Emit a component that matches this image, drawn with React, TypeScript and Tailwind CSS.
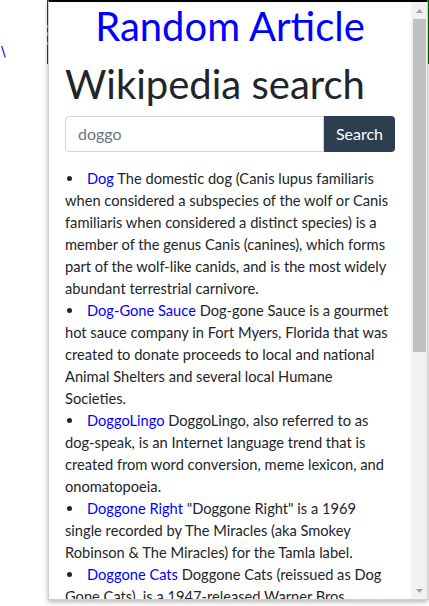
const results = [
  {
    title: "Dog",
    text: "The domestic dog (Canis lupus familiaris when considered a subspecies of the wolf or Canis familiaris when considered a distinct species) is a member of the genus Canis (canines), which forms part of the wolf-like canids, and is the most widely abundant terrestrial carnivore.",
  },
  {
    title: "Dog-Gone Sauce",
    text: "Dog-gone Sauce is a gourmet hot sauce company in Fort Myers, Florida that was created to donate proceeds to local and national Animal Shelters and several local Humane Societies.",
  },
  {
    title: "DoggoLingo",
    text: "DoggoLingo, also referred to as dog-speak, is an Internet language trend that is created from word conversion, meme lexicon, and onomatopoeia.",
  },
  {
    title: "Doggone Right",
    text: "\"Doggone Right\" is a 1969 single recorded by The Miracles (aka Smokey Robinson & The Miracles) for the Tamla label.",
  },
  {
    title: "Doggone Cats",
    text: "Doggone Cats (reissued as Dog Gone Cats), is a 1947-released Warner Bros. theatrical cartoon short in the Merrie Melodies series.",
  },
];

const Arrow = ({ up }: { up?: boolean }) => (
  <svg width="7" height="4" viewBox="0 0 7 4">
    <path d={up ? "M0 4 L3.5 0 L7 4 Z" : "M0 0 L3.5 4 L7 0 Z"} fill="#a3a3a3" />
  </svg>
);

const App = () => {
  return (
    <div className="relative w-[429px] h-[606px] overflow-hidden bg-white font-['Lato',sans-serif]">
      {/* page behind the popup */}
      <div className="absolute left-[47px] right-0 top-0 h-[64px] bg-[#006400]" />
      <div className="absolute left-[47px] top-[25px] w-[2px] h-[3px] bg-[#9a9a9a]" />
      <div className="absolute left-[47px] top-[32px] w-[2px] h-[4px] bg-[#9a9a9a]" />
      <div className="absolute left-[47px] top-[42px] w-[2px] h-[3px] bg-[#9a9a9a]" />
      <span className="absolute left-[1px] top-[43px] text-[14px] leading-[16px] text-[#0000ff] font-['DejaVu_Sans',sans-serif]">
        \
      </span>

      {/* popup */}
      <div className="absolute left-[48px] top-0 w-[380px] h-[600px] flex bg-white border border-[#cfcfcf] border-t-2 border-t-black shadow-[0_2px_5px_rgba(0,0,0,0.3)]">
        <div className="flex-1 overflow-hidden px-4">
          <div className="text-center text-[40px] leading-[48px] text-[#0000ff]">
            Random Article
          </div>
          <h1 className="mt-[10px] text-[40px] leading-[48px] text-[#212529]">
            Wikipedia search
          </h1>
          <div className="mt-2 flex h-[36px]">
            <input
              className="flex-1 min-w-0 px-3 text-[16px] border border-[#ced4da] rounded-l-[4px] outline-none placeholder:text-[#6c757d]"
              placeholder="doggo"
            />
            <button className="px-3 text-[16px] text-white bg-[#2c3e50] rounded-r-[4px]">
              Search
            </button>
          </div>
          <ul className="mt-[16px] text-[14.667px] leading-[22px] text-[#212529]">
            {results.map((r) => (
              <li key={r.title}>
                <span className="inline-block w-[22px] align-middle">
                  <span className="block w-[5px] h-[5px] ml-[2px] mb-[3px] rounded-full bg-[#212529]" />
                </span>
                <a href="#" className="text-[#0000ff]">
                  {r.title}
                </a>{" "}
                {r.text}
              </li>
            ))}
          </ul>
        </div>

        {/* scrollbar */}
        <div className="w-[16px] bg-[#f1f1f1] flex flex-col items-center">
          <div className="h-[16px] flex items-center justify-center pt-[2px]">
            <Arrow up />
          </div>
          <div className="mt-[1px] w-[13px] h-[333px] bg-[#c1c1c1]" />
          <div className="flex-1" />
          <div className="h-[16px] flex items-center justify-center">
            <Arrow />
          </div>
        </div>
      </div>
    </div>
  );
};

export default App;
